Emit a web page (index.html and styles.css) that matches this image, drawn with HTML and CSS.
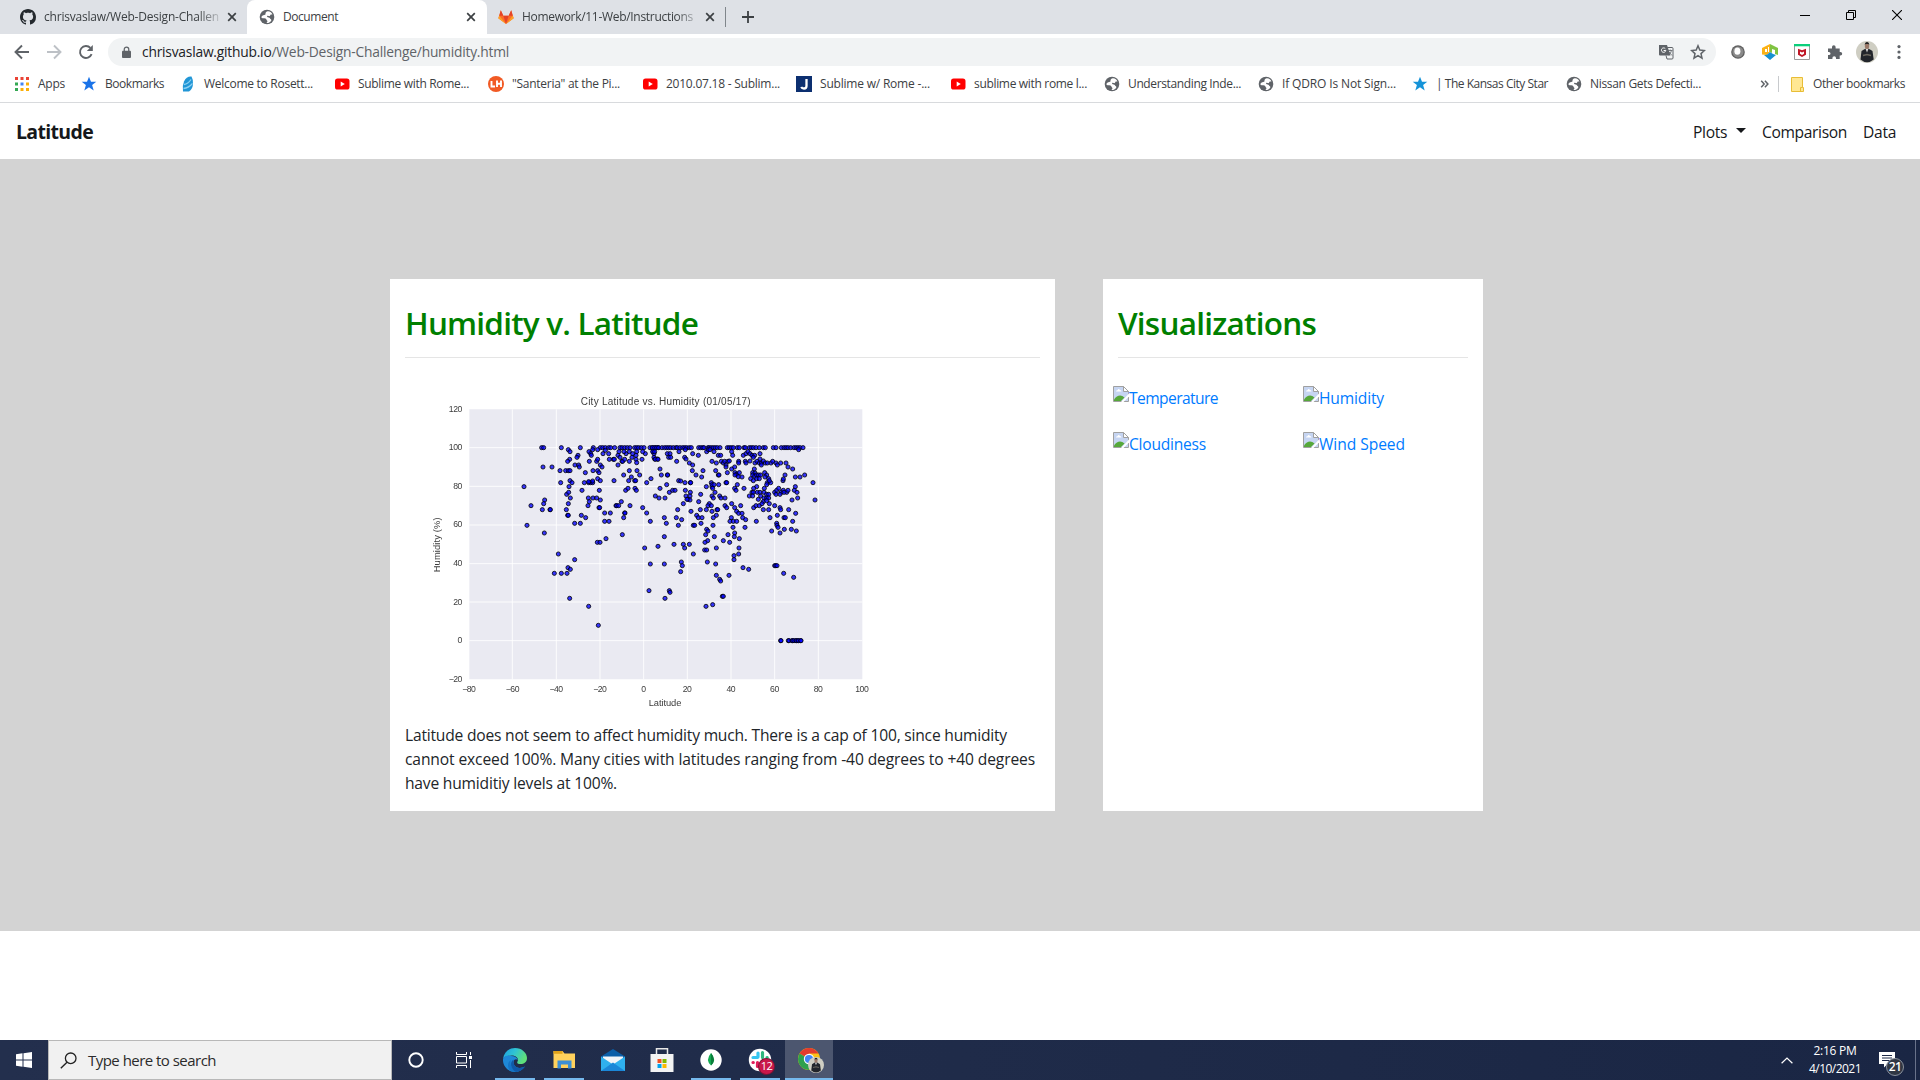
FILE: index.html
```html
<!DOCTYPE html>
<html lang="en">
<head>
<meta charset="utf-8">
<title>Document</title>
<link rel="stylesheet" href="styles.css">
</head>
<body>
<svg class="defs" aria-hidden="true">
  <symbol id="globe" viewBox="0 0 16 16"><circle cx="8" cy="8" r="7.3" fill="#5f6368"/><path d="M9 2.2c-1.8.2-2.700 1.300-2.500 2.500.3 1-.9 1.300-2.200 1.500-.9.200-1.600 1-1.900 1.700.1 1 .9 1.300 1.900 1.300 1.400 0 2.800.1 3.100 1.300.1.900 1.100 1 1 1.900-.1.700-.8 1-.9 1.600 1.900.2 3.500-.6 4.600-2 .5-1 .2-1.600-.7-1.900-.4-1.300-1.300-1.800-2.600-1.900-.8-.1-1-1-.3-1.400.8-.5 1.500.7 2.200.3.800-.4.200-1.500 1.300-1.600l1.400-.1C12.900 3.600 11.200 2.300 9 2.200z" fill="#fff"/></symbol>
  <symbol id="yt" viewBox="0 0 16 16"><rect x="1" y="2.500" width="14.500" height="11" rx="2.600" fill="#f00"/><path d="M6.700 5.600v4.800L10.800 8z" fill="#fff"/></symbol>
  <symbol id="x" viewBox="0 0 10 10"><path d="M1.200 1.200l7.600 7.600M8.800 1.200L1.200 8.800" stroke="#3c4043" stroke-width="1.700"/></symbol>
  <symbol id="star" viewBox="0 0 16 16"><path d="M8 .8l2 5h5.300l-4.200 3.300 1.600 5.400L8 11.300l-4.700 3.200 1.600-5.400L.7 5.800H6z"/></symbol>
  <symbol id="broken" viewBox="0 0 16 16"><path d="M.5.500h10l5 5v10H.5z" fill="#c6d5f2" stroke="#a0a0a0"/><path d="M10.500.5v5h5z" fill="#fff" stroke="#a0a0a0"/><path d="M3 5.500q.3-1.500 1.500-1.300Q5.500 2 7 4q1.500 0 1.500 1.500z" fill="#fff"/><path d="M1 15v-1.500C4 9 8 8 11.500 11.500L8 15z" fill="#56a83a"/><path d="M16 7.500v3L10.500 16H8z" fill="#fff"/></symbol>
  <symbol id="portrait" viewBox="0 0 22 22"><circle cx="11" cy="11" r="11" fill="#cfcec3"/><path d="M4.500 18.500L5.500 10l3.700-2.300h3.600L16.500 10l1.200 8.500Q11 24 4.500 18.500z" fill="#22252b"/><path d="M9.700 8h2.600L11 11.500z" fill="#ddd"/><ellipse cx="11" cy="5" rx="2.200" ry="2.900" fill="#9b7968"/><path d="M8.700 4Q9 1 11 1t2.300 3l-1-1H9.600z" fill="#222"/><path d="M7 14.500l4-1 4 1" stroke="#6b675f" stroke-width="1.400" fill="none"/></symbol>
</svg>

<header class="browser">
  <div class="tabs">
    <div class="tab tab-first">
      <svg class="i16" viewBox="0 0 16 16"><path fill="#24292e" d="M8 0C3.580 0 0 3.580 0 8c0 3.540 2.290 6.530 5.470 7.590.4.070.55-.17.55-.38 0-.19-.01-.82-.01-1.490-2.010.37-2.530-.49-2.690-.94-.09-.23-.48-.94-.82-1.130-.28-.15-.68-.52-.01-.53.63-.01 1.080.58 1.230.82.72 1.210 1.870.87 2.330.66.070-.52.28-.87.51-1.070-1.780-.2-3.640-.89-3.640-3.950 0-.87.31-1.590.82-2.150-.08-.2-.36-1.020.08-2.120 0 0 .67-.21 2.200.82.64-.18 1.320-.27 2-.27s1.360.09 2 .27c1.530-1.040 2.200-.82 2.200-.82.44 1.100.16 1.920.08 2.120.51.56.82 1.270.82 2.150 0 3.070-1.870 3.750-3.650 3.950.29.25.54.73.54 1.480 0 1.070-.01 1.930-.01 2.200 0 .21.15.46.55.38A8 8 0 0 0 16 8c0-4.420-3.580-8-8-8z"/></svg>
      <span class="tab-title fade"><span data-w="175">chrisvaslaw/Web-Design-Challen</span></span>
      <svg class="close"><use href="#x"/></svg>
    </div>
    <div class="tab tab-active">
      <svg class="i16"><use href="#globe"/></svg>
      <span class="tab-title"><span data-w="55">Document</span></span>
      <svg class="close"><use href="#x"/></svg>
    </div>
    <div class="tab tab-last">
      <svg class="i16" viewBox="0 0 16 16"><path d="M8 15L.3 9.300 2.800 1.300l2.500 5.400h5.400l2.500-5.400 2.500 8z" fill="#fc6d26"/><path d="M8 15L5.300 6.700h5.400z" fill="#e24329"/><path d="M2.800 1.300l2.500 5.400h-4zM13.200 1.300l-2.500 5.400h4z" fill="#e24329"/><path d="M.3 9.300l1-2.600L8 15zM15.700 9.300l-1-2.600L8 15z" fill="#fca326"/></svg>
      <span class="tab-title fade"><span data-w="171">Homework/11-Web/Instructions</span></span>
      <svg class="close"><use href="#x"/></svg>
    </div>
    <span class="tab-sep"></span>
    <svg class="plus" viewBox="0 0 12 12"><path d="M6 0v12M0 6h12" stroke="#3c4043" stroke-width="1.800"/></svg>
    <div class="window-buttons">
      <svg viewBox="0 0 10 10"><path d="M0 5.500h10" stroke="#000"/></svg>
      <svg viewBox="0 0 10 10"><path d="M.5 2.500h7v7h-7zM2.500 2.500v-2h7v7h-2" fill="none" stroke="#000"/></svg>
      <svg viewBox="0 0 10 10"><path d="M0 0l10 10M10 0L0 10" stroke="#000" stroke-width="1.100"/></svg>
    </div>
  </div>

  <div class="toolbar">
    <svg class="nav-icon" viewBox="0 0 16 16"><path d="M15 8H2M8 1.500L1.500 8 8 14.500" fill="none" stroke="#5f6368" stroke-width="1.900"/></svg>
    <svg class="nav-icon" viewBox="0 0 16 16"><path d="M1 8h13M8 1.500L14.500 8 8 14.500" fill="none" stroke="#bdc1c6" stroke-width="1.900"/></svg>
    <svg class="nav-icon" viewBox="0 0 16 16"><path d="M13.600 10.200A6 6 0 1 1 12.400 3.900" fill="none" stroke="#5f6368" stroke-width="1.900"/><path d="M14.800 1v6H8.800z" fill="#5f6368"/></svg>
    <div class="omnibox">
      <svg class="lock" viewBox="0 0 10 14"><path d="M1 5h8q1 0 1 1v6q0 1-1 1H1q-1 0-1-1V6q0-1 1-1z" fill="#5f6368"/><path d="M2.500 6V3.500a2.500 2.500 0 0 1 5 0V6" fill="none" stroke="#5f6368" stroke-width="1.400"/></svg>
      <span class="url" data-w="367"><b>chrisvaslaw.github.io</b>/Web-Design-Challenge/humidity.html</span>
      <svg class="i16 translate" viewBox="0 0 16 16"><path d="M1 1h8l3.500 10.500H2q-1 0-1-1z" fill="#5f6368"/><path d="M9.300 3.500H14q1 0 1 1V14q0 1-1 1H9l-1-3.500" fill="none" stroke="#5f6368" stroke-width="1"/><path d="M7.300 4.700A2.200 2.200 0 1 0 7.800 6.500H5.600" fill="none" stroke="#fff" stroke-width="1"/><path d="M10 6.500h4.500M12.200 5.500v1M13.500 6.500q-.5 3-3 4.500M11 8l3 3.500" fill="none" stroke="#5f6368" stroke-width=".8"/></svg>
      <svg class="i16 fav" viewBox="0 0 16 16"><path d="M8 1.800l1.800 4.300 4.600.4L11 9.600l1 4.600-4-2.500-4 2.500 1-4.600-3.400-3.100 4.600-.4z" fill="none" stroke="#5f6368" stroke-width="1.500"/></svg>
    </div>
    <div class="extensions">
      <svg viewBox="0 0 16 16"><circle cx="8" cy="8" r="6.800" fill="#5e5e5e"/><circle cx="8" cy="8" r="5.600" fill="#8a8a8a"/><ellipse cx="7.400" cy="7.200" rx="3" ry="3.600" fill="#fff"/></svg>
      <svg viewBox="0 0 16 16"><path d="M0 4l8-4v8l-3 3-5-.5z" fill="#fbb216"/><path d="M8 0l8 4v7l-3-1V6l-3-1v4L8 8z" fill="#80c342"/><path d="M2 11l3-.2L8 8l3 2 3 1-6 5z" fill="#1690d0"/><path d="M3 8V5h2v3zM6 8V3h1v5z" fill="#fff"/></svg>
      <svg viewBox="0 0 16 16"><path d="M.5.500h15v15H.5z" fill="#fff" stroke="#9b9b9b"/><path d="M0 0h16v2.300H0z" fill="#0bcf7b"/><path d="M4 4.800l4 1.500 4-1.500v6L8 13l-4-2.200z" fill="#c01828"/><path d="M6 7.500l2 1 2-1v2.300L8 11l-2-1.200z" fill="#fff"/></svg>
      <svg viewBox="0 0 16 16"><path d="M1 4.500h4V3q0-1.800 1.800-1.800T8.600 3v1.500h4.100V8h.8q1.700 0 1.700 1.700T13.500 11.400h-.8V15H9v-1q0-1.800-1.800-1.800T5.400 14v1H1v-4h.9q1.600 0 1.600-1.500T1.900 8H1z" fill="#5f6368"/></svg>
      <svg class="avatar"><use href="#portrait"/></svg>
      <svg viewBox="0 0 16 16"><g fill="#5f6368"><circle cx="8" cy="2.600" r="1.600"/><circle cx="8" cy="8" r="1.600"/><circle cx="8" cy="13.400" r="1.600"/></g></svg>
    </div>
  </div>

  <div class="bookmarks">
    <div class="bm bm-apps"><svg class="i16" viewBox="0 0 16 16"><path d="M1 1h3v3H1zM6.500 1h3v3h-3zM12 1h3v3h-3z" fill="#ea4335"/><path d="M1 6.500h3v3H1zM1 12h3v3H1z" fill="#34a853"/><path d="M6.500 6.500h3v3h-3z" fill="#4285f4"/><path d="M12 6.500h3v3h-3zM6.500 12h3v3h-3zM12 12h3v3h-3z" fill="#fbaf08"/></svg><span data-w="27">Apps</span></div>
    <div class="bm bm-marks"><svg class="i16" fill="#1a73e8"><use href="#star"/></svg><span data-w="59">Bookmarks</span></div>
    <div class="bm"><svg class="i16" viewBox="0 0 16 16"><path d="M3 15.500q-1-5.500 1-10Q6.500 0 11.500.5q2 3.500 1.500 8-.7 5-4 7z" fill="#2196d6"/><path d="M4 8.500q4-.5 7-5M3.500 12.500q5-.5 9-5" stroke="#8bd0f2" stroke-width="1.300" fill="none"/></svg><span data-w="109">Welcome to Rosett...</span></div>
    <div class="bm"><svg class="i16"><use href="#yt"/></svg><span data-w="111">Sublime with Rome...</span></div>
    <div class="bm"><svg class="i16" viewBox="0 0 16 16"><circle cx="8" cy="8" r="8" fill="#f15a24"/><path d="M3.500 5v5.500H7M9 4.500v6.500M13 4.500v6.500M9 7.800h4" stroke="#fff" stroke-width="1.900" fill="none"/></svg><span data-w="108">"Santeria" at the Pi...</span></div>
    <div class="bm"><svg class="i16"><use href="#yt"/></svg><span data-w="114">2010.07.18 - Sublim...</span></div>
    <div class="bm"><svg class="i16" viewBox="0 0 16 16"><path d="M0 0h16v16H0z" fill="#0c2f70"/><path d="M10.500 3v7q0 2.500-2.500 2.500-2 0-2.800-1.500" stroke="#fff" stroke-width="2.300" fill="none"/></svg><span data-w="110">Sublime w/ Rome -...</span></div>
    <div class="bm"><svg class="i16"><use href="#yt"/></svg><span data-w="113">sublime with rome l...</span></div>
    <div class="bm"><svg class="i16"><use href="#globe"/></svg><span data-w="113">Understanding Inde...</span></div>
    <div class="bm"><svg class="i16"><use href="#globe"/></svg><span data-w="114">If QDRO Is Not Sign...</span></div>
    <div class="bm"><svg class="i16" fill="#1593d8"><use href="#star"/></svg><span data-w="112">| The Kansas City Star</span></div>
    <div class="bm"><svg class="i16"><use href="#globe"/></svg><span data-w="111">Nissan Gets Defecti...</span></div>
    <svg class="more" viewBox="0 0 8 8"><path d="M.7.7L3.700 4 .7 7.300M4.400.7L7.400 4 4.400 7.300" fill="none" stroke="#5f6368" stroke-width="1.500"/></svg>
    <span class="bm-sep"></span>
    <div class="bm bm-other"><svg viewBox="0 0 13 15"><path d="M.5.500h11v10h1v4H.5z" fill="#ffe793" stroke="#e8bd36"/><path d="M9.500 14v-3.500h2" fill="none" stroke="#e8bd36"/></svg><span data-w="92">Other bookmarks</span></div>
  </div>
</header>

<nav class="navbar">
  <a class="brand" data-w="77">Latitude</a>
  <div class="nav-links">
    <a class="plots"><span data-w="34">Plots</span><i class="caret"></i></a>
    <a><span data-w="85">Comparison</span></a>
    <a><span data-w="33">Data</span></a>
  </div>
</nav>

<main class="page">
  <section class="card card-main">
    <h2><span data-w="293">Humidity v. Latitude</span></h2>
    <hr>
    <svg class="chart" viewBox="0 0 1380 990" id="chart"></svg>
    <p><span data-w="602">Latitude does not seem to affect humidity much. There is a cap of 100, since humidity</span><br><span data-w="630">cannot exceed 100%. Many cities with latitudes ranging from -40 degrees to +40 degrees</span><br><span data-w="212">have humiditiy levels at 100%.</span></p>
  </section>
  <section class="card card-side">
    <h2><span data-w="198">Visualizations</span></h2>
    <hr>
    <div class="thumbs">
      <a><svg class="i16"><use href="#broken"/></svg><span data-w="89">Temperature</span></a>
      <a><svg class="i16"><use href="#broken"/></svg><span data-w="65">Humidity</span></a>
      <a><svg class="i16"><use href="#broken"/></svg><span data-w="77">Cloudiness</span></a>
      <a><svg class="i16"><use href="#broken"/></svg><span data-w="86">Wind Speed</span></a>
    </div>
  </section>
</main>

<footer class="taskbar">
  <div class="cell"><svg class="i16" viewBox="0 0 16 16"><path d="M0 2.200L6.500 1.300v6.200H0zM7.500 1.200L16 0v7.500H7.500zM0 8.500h6.500v6.200L0 13.800zM7.500 8.500H16V16l-8.500-1.200z" fill="#fff"/></svg></div>
  <div class="search">
    <svg viewBox="0 0 17 17"><circle cx="10.700" cy="6.300" r="5.300" fill="none" stroke="#222" stroke-width="1.300"/><path d="M7 10.200L.8 16.200" stroke="#222" stroke-width="1.400"/></svg>
    <span data-w="128">Type here to search</span>
  </div>
  <div class="cell"><svg class="i16" viewBox="0 0 16 16"><circle cx="8" cy="8" r="6.700" fill="none" stroke="#fff" stroke-width="1.900"/></svg></div>
  <div class="cell cell-view"><svg class="i16" viewBox="0 0 16 16"><path d="M.5 0v2.500h10V0M.5 16v-2.500h10V16M.5 4.500h10v6.500H.5zM14.500 0v3M14.500 8v8" fill="none" stroke="#fff"/><path d="M13 4h3v3h-3z" fill="#fff"/></svg></div>
  <div class="cell open"><svg class="app" viewBox="0 0 24 24"><defs><linearGradient id="e1" x1="0" y1="0" x2="1" y2=".4"><stop offset="0" stop-color="#1b9de2"/><stop offset=".5" stop-color="#2fc3d4"/><stop offset="1" stop-color="#5fe07a"/></linearGradient></defs><path d="M0 11C1 4 6 0 12 0c7 0 12 5 12 10 0 4-3 6-6.500 6-2.500 0-4-1-3-2.500C16 11 13.500 7.500 9 7.500 5 7.500 1 9 0 11z" fill="url(#e1)"/><path d="M0 11c1-3 5-4.500 8.500-3C11.500 8 14 9.500 14.800 12 12 10 9.500 13 11 16.500c1.500 3.500 6.500 4.500 11 2C19 22.500 15.500 24 12 24 5 24-.5 18 0 11z" fill="#1e88d8"/><path d="M8 12c-1.500 3 0 8 5 11.900Q9 24 7 22.500C4 19 4.500 14 8 12z" fill="#1574c6"/><path d="M10.500 11.500C6.500 14 7.500 21 13 23.900c3.500-.2 6.500-1.900 9-5.400-4.500 2.500-9.500 1.500-11-2q-1-2.500-.5-5z" fill="#1059a8"/></svg></div>
  <div class="cell open"><svg class="app" viewBox="0 0 24 24"><path d="M1.500 3h9l2 2.500H23V20H1.500z" fill="#ffd15c"/><path d="M1.500 3h9v2.800h-9z" fill="#e0a21a"/><path d="M5.500 20.500v-8h14v8h-3.500v-4h-7v4z" fill="#3b8fd6"/></svg></div>
  <div class="cell"><svg class="app" viewBox="0 0 24 24"><path d="M0 8.500L12 1l12 7.500V12H0z" fill="#0b5ea8"/><path d="M2 8.500h20v8H2z" fill="#f2f4f8"/><path d="M0 8.500l12 8 12-8V23H0z" fill="#2fb0ee"/><path d="M0 23l12-8.500 3 2.300L24 23z" fill="#1b87d8"/></svg></div>
  <div class="cell"><svg class="app" viewBox="0 0 24 24"><path d="M6.500 7V.8h11V7" fill="none" stroke="#e8e8e8" stroke-width="1.500"/><path d="M.5 6h23v18H.5z" fill="#f3f3f3"/><path d="M7.500 11h4v4h-4z" fill="#f25022"/><path d="M12.500 11h4v4h-4z" fill="#7fba00"/><path d="M7.500 16h4v4h-4z" fill="#00a4ef"/><path d="M12.500 16h4v4h-4z" fill="#ffb900"/></svg></div>
  <div class="cell open"><svg class="app" viewBox="0 0 24 24"><circle cx="12" cy="12" r="10.700" fill="#fff"/><path d="M12 5q-6 7 0 12.500Q18 12 12 5z" fill="#13aa52"/><path d="M12 5q6 7 0 12.500z" fill="#0b7d3b"/></svg></div>
  <div class="cell open"><svg class="app" viewBox="0 0 24 24"><circle cx="12" cy="12" r="11.200" fill="#fff"/><g stroke-width="3.200" stroke-linecap="round"><path d="M10 5v4M5 9.500h4.500" stroke="#36c5f0"/><path d="M14.500 4.500v5M19 9.500h.2" stroke="#2eb67d"/><path d="M9.500 14.500v4M5 14.500h.3" stroke="#e01e5a"/></g></svg><span class="badge">12</span></div>
  <div class="cell open active"><svg class="app chrome" viewBox="0 0 26 26"><circle cx="11" cy="12" r="11" fill="#fbc116"/><path d="M11 12L1.500 6.500A11 11 0 0 1 20.500 6.500H11z" fill="#e33b2e"/><path d="M1.500 6.500A11 11 0 0 0 11 23l4.500-8L11 12z" fill="#2fa04e"/><circle cx="11" cy="12" r="5.200" fill="#fff"/><circle cx="11" cy="12" r="4.100" fill="#4285f4"/><use href="#portrait" x="10" y="10" width="16" height="16"/></svg></div>
  <div class="tray">
    <svg class="chev" viewBox="0 0 12 7"><path d="M.6 6.300L6 1l5.400 5.300" fill="none" stroke="#fff" stroke-width="1.200"/></svg>
    <div class="clock"><span data-w="43">2:16 PM</span><span data-w="52">4/10/2021</span></div>
    <div class="notes"><svg viewBox="0 0 16 16"><path d="M0 0h16v12H8.500L5 15.500V12H0z" fill="#fff"/><path d="M3 3.500h10M3 6h10M3 8.500h10" stroke="#1d2947"/></svg><span class="count">21</span></div>
    <span class="peek"></span>
  </div>
</footer>
<script src="script.js"></script>
</body>
</html>
```
FILE: styles.css
```css
* { box-sizing: border-box; }
body {
  margin: 0;
  width: 1920px;
  height: 1080px;
  overflow: hidden;
  display: flex;
  flex-direction: column;
  background: #fff;
  color: #212529;
  font: 15.6px/24px "Open Sans", "Noto Sans", sans-serif;
}
svg { display: block; flex: none; }
span, a { white-space: nowrap; }
.defs { position: absolute; width: 0; height: 0; }
.i16 { width: 16px; height: 16px; }

.browser { height: 103px; border-bottom: 1px solid #d8dadd; font-size: 12px; line-height: 16px; color: #3c4043; }
.tabs { height: 34px; background: #dee1e6; display: flex; align-items: center; }
.tab { height: 34px; display: flex; align-items: center; gap: 8px; }
.tab-first { width: 247px; padding: 0 10px 0 20px; }
.tab-active { width: 240px; padding: 0 11px 0 12px; background: #fff; border-radius: 8px 8px 0 0; }
.tab-last { width: 238px; padding: 0 10px 0 11px; }
.tab-title { flex: 1; }
.fade { -webkit-mask-image: linear-gradient(90deg, #000 88%, rgba(0, 0, 0, .2)); mask-image: linear-gradient(90deg, #000 88%, rgba(0, 0, 0, .2)); }
.close { width: 10px; height: 10px; }
.tab-sep { width: 1px; height: 20px; background: #80868b; }
.plus { width: 12px; height: 12px; margin-left: 16px; }
.window-buttons { display: flex; gap: 36px; margin: 0 18px 5px auto; }
.window-buttons svg { width: 10px; height: 10px; }

.toolbar { height: 36px; display: flex; align-items: center; gap: 16px; padding: 0 13px 0 14px; }
.nav-icon { width: 16px; height: 16px; }
.omnibox { height: 28px; width: 1608px; margin-left: -2px; border-radius: 14px; background: #f1f3f4; display: flex; align-items: center; padding: 0 10px 0 14px; }
.lock { width: 9px; height: 13px; margin-right: 11px; }
.url { font-size: 13.8px; line-height: 20px; color: #5f6368; }
.url b { font-weight: 400; color: #202124; }
.translate { margin-left: auto; }
.fav { margin-left: 16px; }
.extensions { flex: 1; display: flex; align-items: center; justify-content: space-between; margin-left: -2px; }
.extensions svg { width: 16px; height: 16px; }
.extensions .avatar { width: 22px; height: 22px; margin: 0 -3px; }

.bookmarks { height: 28px; display: flex; align-items: center; padding: 0 14px; }
.bm { display: flex; align-items: center; gap: 8px; width: 154px; }
.bm-apps { width: 67px; }
.bm-marks { width: 99px; }
.more { width: 9px; height: 8px; margin-left: 40px; }
.bm-sep { width: 1px; height: 16px; background: #c8cacd; margin: 0 12px 0 9px; }
.bm-other { width: 115px; gap: 9px; }
.bm-other svg { width: 13px; height: 15px; }

.navbar { height: 56px; display: flex; align-items: center; justify-content: space-between; padding: 1px 24px 0 16px; color: #16181b; }
.brand { font-size: 19.5px; font-weight: 700; line-height: 30px; }
.nav-links { display: flex; gap: 16px; }
.plots { display: flex; align-items: center; }
.caret { margin: 0 0 2px 9px; border: 5px solid transparent; border-top-color: #16181b; border-bottom: 0; }

.page { height: 772px; background: #d3d3d3; display: flex; align-items: flex-start; gap: 48px; padding: 120px 0 0 390px; }
.card { height: 532px; background: #fff; padding: 24px 15px 0; }
.card-main { width: 665px; }
.card-side { width: 380px; }
h2 { margin: 0; height: 38px; font-size: 31.5px; line-height: 40px; font-weight: 600; color: #008000; }
hr { margin: 16px 0 0; border: 0; border-top: 1px solid #e5e5e5; }
.chart { width: 460px; height: 330px; margin: 27px 0 8px 15px; filter: blur(.3px); }
.chart text { font-family: "Liberation Sans", Arial, sans-serif; font-size: 26px; fill: #3c3c3c; }
.chart .title { font-size: 30px; }
.chart .axis { font-size: 28px; }
.chart circle { fill: #0000ff; fill-opacity: .78; stroke: #000; stroke-opacity: .85; stroke-width: 2.800; }
p { margin: 0; }
.thumbs { display: grid; grid-template-columns: 190px 190px; grid-auto-rows: 46px; margin: 28px 0 0 -5px; }
.thumbs a { display: flex; height: 24px; color: #007bff; }

.taskbar { height: 40px; margin-top: auto; display: flex; background: linear-gradient(90deg, #232f4d, #1f2b49 50%, #1a2644); color: #fff; }
.cell { width: 48px; height: 40px; margin-right: 1px; display: flex; align-items: center; justify-content: center; position: relative; }
.cell:first-child { margin: 0; }
.search + .cell { margin: 0; }
.cell-view { margin-right: 3px; }
.search { width: 344px; background: #f1f1f1; border: 1px solid #b8b8b8; display: flex; align-items: center; gap: 11px; padding-left: 11px; color: #2b2b2b; font-size: 15px; }
.search svg { width: 17px; height: 17px; }
.app { width: 24px; height: 24px; }
.chrome { width: 26px; height: 26px; margin-left: 4px; }
.open::after { content: ""; position: absolute; left: 4px; right: 4px; bottom: 0; height: 2px; background: #76b9ed; }
.active { background: #4c566f; }
.active::after { left: 0; right: 0; }
.badge { position: absolute; left: 23px; top: 19px; width: 15px; height: 15px; border-radius: 50%; background: #c9184a; box-shadow: 0 0 0 1px #7c1535; font-size: 11px; line-height: 14px; text-align: center; letter-spacing: -.5px; }
.tray { margin-left: auto; display: flex; align-items: center; }
.chev { width: 12px; height: 7px; margin-right: 16px; }
.clock { width: 52px; display: flex; flex-direction: column; align-items: center; font-size: 12px; line-height: 18px; }
.notes { position: relative; width: 16px; margin-left: 18px; }
.notes svg { width: 16px; height: 16px; }
.count { position: absolute; left: 7px; top: 6px; width: 18px; height: 18px; border: 1px solid #8b919d; border-radius: 50%; background: #303743; font-size: 12px; line-height: 15px; text-align: center; font-weight: 600; letter-spacing: -.5px; }
.peek { width: 1px; height: 40px; margin: 0 4px 0 20px; background: #69728a; }
```
FILE: script.js
```js
document.querySelectorAll('[data-w]').forEach(function (el) {
  var want = +el.dataset.w;
  el.style.display = 'inline-block';
  var have = el.getBoundingClientRect().width;
  el.style.letterSpacing = ((want - have) / el.textContent.length).toFixed(3) + 'px';
});

// Scatter plot: chart units, x/y pairs.
var full = [365,371,424,481,520,541,548,556,566,572,584,600,606,614,622,630,644,650,656,664,672,690,698,706,714,
697,704,710,716,726,734,740,746,752,760,768,772,780,788,794,800,808,814,836,842,848,852,864,868,874,880,886,892,900,
922,928,934,940,952,958,972,976,988,994,1000,1008,1018,1030,1036,1060,1068,1084,1092,1098,1104,1112,1122,1128,1134,1140,1149];
var left = [445,194,450,200,474,211,471,217,449,223,443,229,369,246,396,246,465,240,476,240,478,246,420,257,437,257,445,257,450,257,
496,263,422,293,450,287,456,293,447,305,312,305,440,328,446,322,451,339,374,345,371,356,333,362,367,374,390,374,391,374,445,356,
439,374,443,391,445,391,321,421,373,444,464,415,481,415,484,391,497,398,486,316,493,293,506,293,512,293,518,293,518,288,506,290,
505,339,519,339,530,339,508,350,504,362,541,345,537,368,539,368,538,316,533,281,541,287,519,257,533,257,537,263,508,229,530,229,
533,223,541,240,546,246,507,200,512,206,514,211,518,194,533,194,549,206,566,206,556,196,568,223,580,223,583,223,594,240,597,200,
594,211,600,217,606,229,608,229,614,223,618,206,612,200,628,200,638,206,636,217,628,229,648,223,650,233,650,200,666,223,676,206,
668,200,648,211,611,270,628,257,651,257,659,270,634,276,626,287,644,287,647,287,582,287,617,316,624,310,645,310,649,316,693,281,
680,293,554,384,571,384,554,409,567,409,588,362,590,362,596,362,604,350,630,362,614,384,615,384,611,398,668,368,680,384,691,409,
532,472,540,472,558,461,607,449,415,507,464,524,444,548,451,553,403,565,424,565,441,565,449,640,506,664,535,721,674,489,
691,537,687,617,706,333,700,200,702,206,704,222,712,222];
var right = [38,200,44,200,42,217,46,223,54,223,60,252,64,270,82,270,83,270,80,299,60,310,57,339,75,339,88,322,98,316,105,316,
82,206,90,206,86,217,92,217,110,229,117,200,136,194,158,206,134,217,138,222,148,234,158,240,157,257,168,270,185,276,189,257,
175,211,116,287,122,288,135,293,151,293,152,293,136,316,151,322,138,333,150,333,144,343,150,345,141,343,130,356,113,374,73,398,
109,398,125,404,79,415,115,421,160,421,164,421,153,379,170,391,175,398,186,398,183,415,181,374,176,350,182,328,199,305,214,293,
216,305,216,299,222,299,236,299,218,310,225,322,216,333,220,339,239,333,243,339,255,339,208,356,204,362,214,362,199,374,216,379,
231,374,233,374,229,391,220,398,219,421,200,433,204,438,197,449,223,455,203,467,195,472,194,495,200,495,229,489,202,531,227,537,
229,571,239,583,242,588,267,571,247,634,250,634,198,664,218,659,160,507,130,478,148,478,134,489,102,478,73,455,54,484,73,537,
124,531,127,542,122,560,88,617,90,622,75,640,200,200,205,194,210,194,216,229,229,234,222,200,235,211,242,211,244,229,250,234,
254,229,258,240,264,229,268,228,258,246,262,263,275,252,284,246,227,257,235,270,237,270,275,200,278,211,296,229,296,234,316,229,
318,234,310,211,318,206,324,200,330,206,336,211,344,211,340,217,360,206,330,228,345,234,351,229,358,234,364,234,370,228,376,234,
382,234,393,234,364,240,360,222,398,229,408,234,412,240,422,234,438,234,444,246,458,252,285,263,290,268,298,263,285,270,295,275,
306,276,258,293,260,293,292,299,284,310,288,316,312,310,255,362,260,368,275,356,302,362,284,368,290,379,296,385,306,385,308,398,
317,404,274,398,270,409,280,409,290,409,279,427,315,427,284,444,264,449,283,455,298,461,250,467,269,472,297,489,282,512,296,507,
282,524,309,548,326,553,343,252,338,263,345,264,338,270,344,274,350,270,356,270,362,270,332,281,340,287,350,281,358,281,374,263,
380,270,375,276,386,281,382,293,392,293,388,287,380,299,350,305,341,310,373,310,336,322,340,322,328,333,338,333,352,322,360,322,
372,322,380,328,386,328,355,343,362,333,372,339,380,339,386,339,370,350,380,347,388,356,341,368,348,362,358,362,366,356,370,374,
386,374,404,362,420,368,422,374,446,374,412,391,390,398,432,398,436,398,349,409,467,385,458,409,410,415,411,421,414,427,395,438,
420,444,433,433,454,433,469,438,404,322,410,316,416,310,424,322,430,316,440,322,444,316,408,328,420,328,432,322,466,305,463,316,
471,322,456,345,473,339,429,287,430,282,435,270,466,276,480,276,494,270,519,293,525,345,404,542,407,542,411,542,431,565,461,577,
422,767,423,767,445,767,447,767,456,767,458,767,462,767,468,767,469,767,474,767,476,767,482,767,483,767,476,194];

var out = '<path d="M148 73h1179v810H148z" fill="#eaeaf2"/>';
var grid = '';
[277, 409, 540, 671, 802, 933, 1064, 1195].forEach(function (x) { grid += 'M' + x + ' 73v810'; });
[188, 304, 420, 536, 651, 767].forEach(function (y) { grid += 'M148 ' + y + 'h1179'; });
out += '<path d="' + grid + '" stroke="#fff" stroke-opacity=".85" stroke-width="3"/>';
function dot(x, y) { out += '<circle cx="' + x + '" cy="' + y + '" r="6.200"/>'; }
full.forEach(function (x) { dot(x, 188); });
for (var i = 0; i < left.length; i += 2) dot(left[i], left[i + 1]);
for (var j = 0; j < right.length; j += 2) dot(right[j] + 660, right[j + 1]);
[120, 100, 80, 60, 40, 20, 0, -20].forEach(function (v, k) {
  var s = String(v).replace('-', '\u2212');
  out += '<text x="127" y="' + (80 + k * 115.800) + '" text-anchor="end" textLength="' + s.length * 13.500 + '">' + s + '</text>';
});
[-80, -60, -40, -20, 0, 20, 40, 60, 80, 100].forEach(function (v, k) {
  var s = String(v).replace('-', '\u2212');
  out += '<text x="' + (147 + k * 131) + '" y="921" text-anchor="middle" textLength="' + s.length * 13.700 + '">' + s + '</text>';
});
out += '<text class="title" x="482" y="59" textLength="510">City Latitude vs. Humidity (01/05/17)</text>';
out += '<text class="axis" x="686" y="963" textLength="98">Latitude</text>';
out += '<text class="axis" transform="translate(61 562) rotate(-90)" textLength="165">Humidity (%)</text>';
document.getElementById('chart').innerHTML = out;
```
